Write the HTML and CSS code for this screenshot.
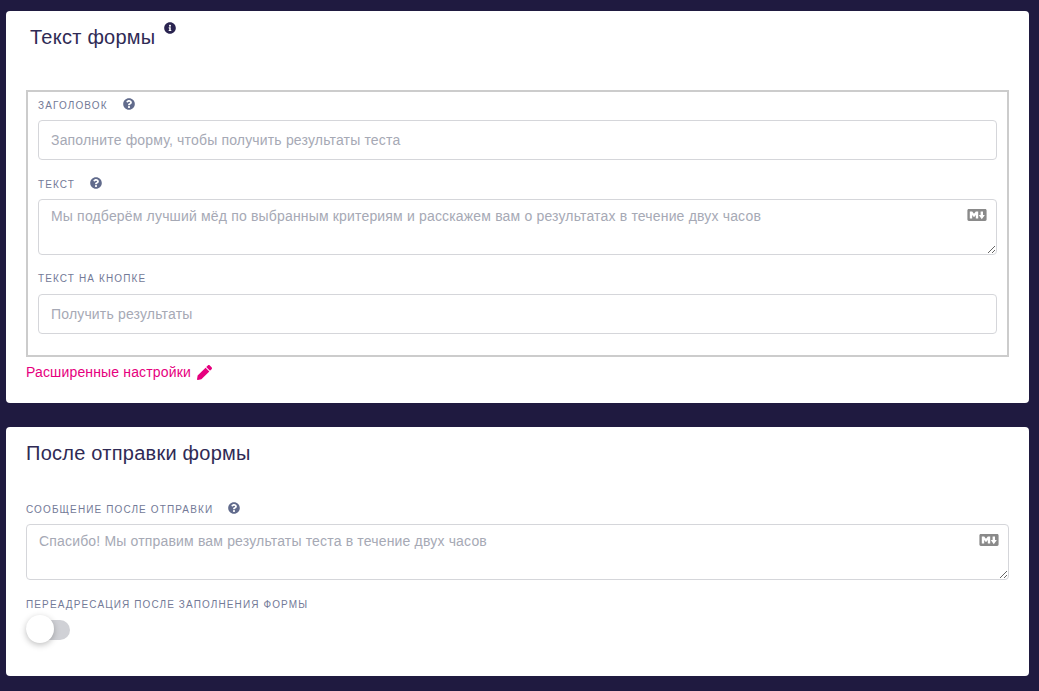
FILE: index.html
```html
<!DOCTYPE html>
<html lang="en">
<head>
  <meta charset="UTF-8">
  <meta name="viewport" content="width=device-width, initial-scale=1.0">
  <title>Настройки формы</title>
  <link rel="stylesheet" href="styles.css">
</head>
<body>
  <svg class="icon-defs" width="0" height="0">
    <symbol id="icon-question" viewBox="0 0 512 512"><path d="M504 256c0 136.997-111.043 248-248 248S8 392.997 8 256C8 119.083 119.043 8 256 8s248 111.083 248 248zM262.655 90c-54.497 0-89.255 22.957-116.549 63.758-3.536 5.286-2.353 12.415 2.715 16.258l34.699 26.31c5.205 3.947 12.621 3.008 16.665-2.122 17.864-22.658 30.113-35.797 57.303-35.797 20.429 0 45.698 13.148 45.698 32.958 0 14.976-12.363 22.667-32.534 33.976C247.128 238.528 216 254.941 216 296v4c0 6.627 5.373 12 12 12h56c6.627 0 12-5.373 12-12v-1.333c0-28.462 83.186-29.647 83.186-106.667 0-58.002-60.165-102-116.531-102zM256 338c-25.365 0-46 20.635-46 46 0 25.364 20.635 46 46 46s46-20.636 46-46c0-25.365-20.635-46-46-46z"/></symbol>
    <symbol id="icon-markdown" viewBox="0 3 16 10"><path d="M14.85 3H1.15C.52 3 0 3.52 0 4.15v7.69C0 12.48.52 13 1.15 13h13.69c.64 0 1.15-.52 1.15-1.15v-7.7C16 3.52 15.48 3 14.85 3zM9 11H7V8L5.5 9.92 4 8v3H2V5h2l1.5 2L7 5h2v6zm2.99.5L9.5 8H11V5h2v3h1.5l-2.51 3.5z"/></symbol>
  </svg>

  <section class="card">
    <h2 class="card-title card-title-inset">
      Текст формы
      <svg class="info-icon" viewBox="0 0 512 512"><path d="M256 8C119.043 8 8 119.083 8 256c0 136.997 111.043 248 248 248s248-111.003 248-248C504 119.083 392.957 8 256 8zm0 110c23.196 0 42 18.804 42 42s-18.804 42-42 42-42-18.804-42-42 18.804-42 42-42zm56 254c0 6.627-5.373 12-12 12h-88c-6.627 0-12-5.373-12-12v-24c0-6.627 5.373-12 12-12h12v-64h-12c-6.627 0-12-5.373-12-12v-24c0-6.627 5.373-12 12-12h64c6.627 0 12 5.373 12 12v100h12c6.627 0 12 5.373 12 12v24z"/></svg>
    </h2>

    <div class="field-box">
      <div class="field">
        <label class="field-label">Заголовок <svg class="help-icon"><use href="#icon-question"/></svg></label>
        <input class="text-input" type="text" placeholder="Заполните форму, чтобы получить результаты теста">
      </div>
      <div class="field">
        <label class="field-label">Текст <svg class="help-icon"><use href="#icon-question"/></svg></label>
        <div class="area-wrap">
          <textarea class="text-area" placeholder="Мы подберём лучший мёд по выбранным критериям и расскажем вам о результатах в течение двух часов"></textarea>
          <svg class="md-icon"><use href="#icon-markdown"/></svg>
        </div>
      </div>
      <div class="field">
        <label class="field-label">Текст на кнопке</label>
        <input class="text-input" type="text" placeholder="Получить результаты">
      </div>
    </div>

    <a class="advanced-link" href="#">
      Расширенные настройки
      <svg class="pencil-icon" viewBox="0 0 512 512"><path d="M497.9 142.1l-46.1 46.1c-4.7 4.7-12.3 4.7-17 0l-111-111c-4.7-4.7-4.7-12.3 0-17l46.1-46.1c18.7-18.7 49.1-18.7 67.9 0l60.1 60.1c18.8 18.7 18.8 49.1 0 67.9zM284.2 99.8L21.6 362.4.4 483.9c-2.9 16.4 11.4 30.6 27.8 27.8l121.5-21.3 262.6-262.6c4.7-4.7 4.7-12.3 0-17l-111-111c-4.8-4.7-12.4-4.7-17.1 0z"/></svg>
    </a>
  </section>

  <section class="card card-after">
    <h2 class="card-title">После отправки формы</h2>

    <div class="field">
      <label class="field-label">Сообщение после отправки <svg class="help-icon"><use href="#icon-question"/></svg></label>
      <div class="area-wrap">
        <textarea class="text-area" placeholder="Спасибо! Мы отправим вам результаты теста в течение двух часов"></textarea>
        <svg class="md-icon"><use href="#icon-markdown"/></svg>
      </div>
    </div>

    <div class="field field-toggle">
      <label class="field-label">Переадресация после заполнения формы</label>
      <div class="toggle"><span class="toggle-knob"></span></div>
    </div>
  </section>
</body>
</html>
```

FILE: styles.css
```css
html {
  background: #1f1a40;
}

body {
  margin: 0;
  padding: 11px 10px 15px 6px;
  background: #1f1a40;
  font-family: 'Liberation Sans', Arial, sans-serif;
  color: #2f2a55;
}

.icon-defs {
  position: absolute;
}

.card {
  background: #fff;
  border-radius: 4px;
  padding: 14px 20px 22px;
}

.card-after {
  margin-top: 24px;
  padding-bottom: 36px;
}

.card-title {
  margin: 0;
  height: 24px;
  font-size: 20px;
  line-height: 24px;
  font-weight: 400;
  letter-spacing: 0.25px;
  color: #2f2a55;
}

.card-title-inset {
  padding-left: 4px;
}

/* negative margin keeps the raised icon from pushing the title line down */
.info-icon {
  width: 12px;
  height: 12px;
  margin-top: -12px;
  margin-left: 3px;
  vertical-align: 10px;
  fill: #2a2450;
}

.field-box {
  display: flex;
  flex-direction: column;
  gap: 17px;
  margin-top: 41px;
  padding: 6px 10px 21px;
  border: 2px solid #cccccc;
}

.field-label {
  display: block;
  height: 14px;
  margin-bottom: 8px;
  font-size: 10px;
  line-height: 14px;
  letter-spacing: 1.12px;
  text-transform: uppercase;
  color: #737a97;
}

.help-icon {
  width: 12px;
  height: 12px;
  margin-left: 11px;
  vertical-align: -1px;
  fill: #616b8c;
}

.text-input,
.text-area {
  display: block;
  width: 100%;
  box-sizing: border-box;
  border: 1px solid #d5d6da;
  border-radius: 4px;
  padding: 0 12px;
  font-family: inherit;
  font-size: 14px;
  letter-spacing: 0.17px;
  color: #2f2a55;
  outline: none;
}

.text-input {
  height: 40px;
}

.text-area {
  height: 56px;
  padding-top: 8px;
  line-height: 16px;
}

.text-input::placeholder,
.text-area::placeholder {
  color: #a6a9b5;
  opacity: 1;
}

.area-wrap {
  position: relative;
}

.md-icon {
  position: absolute;
  top: 10px;
  right: 10px;
  width: 20px;
  height: 12px;
  fill: #8a8a8a;
}

.advanced-link {
  display: flex;
  align-items: center;
  gap: 6px;
  margin-top: 6px;
  height: 18px;
  font-size: 14px;
  letter-spacing: 0.15px;
  color: #e6007e;
  text-decoration: none;
}

.pencil-icon {
  width: 15px;
  height: 15px;
  margin-top: 1px;
  fill: #e6007e;
}

.card-after > .field {
  margin-top: 37px;
}

.card-after > .field-toggle {
  margin-top: 18px;
}

.toggle {
  position: relative;
  width: 44px;
  height: 20px;
  border-radius: 10px;
  background: #d0d1d6;
}

.toggle-knob {
  position: absolute;
  top: -5px;
  left: 0;
  width: 28px;
  height: 28px;
  border-radius: 50%;
  background: #fff;
  box-shadow: 0 2px 6px rgba(0, 0, 0, 0.25);
}
```
